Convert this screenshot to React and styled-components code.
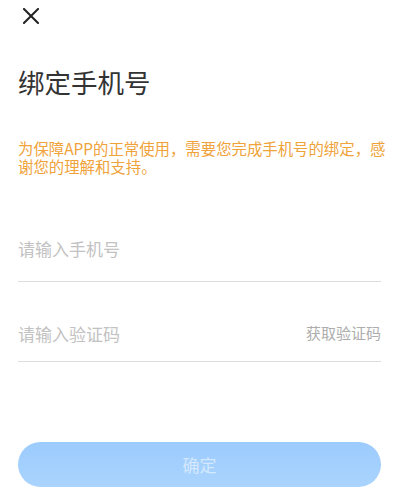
import React, { useState } from 'react'
import styled, { createGlobalStyle } from 'styled-components'

const GlobalStyle = createGlobalStyle`
    html, body {
        margin: 0;
        padding: 0;
        background: #FFF;
    }
    body {
        font-family: "Noto Sans CJK SC", "Noto Sans", sans-serif;
    }
    * {
        box-sizing: border-box;
    }
`

const Container = styled.div`
    width: 399px;
    height: 500px;
    padding: 0 18px;
    background-color: #FFF;
    display: flex;
    flex-direction: column;
`

const TopBar = styled.div`
    height: 32px;
    display: flex;
    align-items: flex-start;
    padding: 7px 0 0 4px;
`

const CloseButton = styled.button`
    border: none;
    background: none;
    padding: 0;
    width: 18px;
    height: 18px;
    cursor: pointer;
    display: flex;
    align-items: center;
    justify-content: center;
`

const Title = styled.h1`
    margin: 32px 0 0;
    font-size: 26.5px;
    font-weight: 400;
    line-height: 36px;
    color: #333;
`

const Notice = styled.p`
    margin: 39px -14px 0 0;
    font-size: 15.4px;
    line-height: 18px;
    color: #F0A33A;
`

const Field = styled.div`
    display: flex;
    align-items: center;
    margin-top: ${props => props.$top}px;
    padding-bottom: ${props => props.$bottom}px;
    border-bottom: 1px solid #DDD;
`

const Input = styled.input`
    flex: 1;
    min-width: 0;
    border: none;
    outline: none;
    padding: 0;
    height: 24px;
    font-family: inherit;
    font-size: 17px;
    color: #333;
    background: transparent;
    &::placeholder {
        color: #C2C2C2;
    }
`

const CodeLink = styled.span`
    font-size: 15px;
    line-height: 24px;
    color: #ADADAD;
    cursor: pointer;
`

const Submit = styled.button`
    margin-top: 80px;
    height: 45px;
    width: 100%;
    border: none;
    border-radius: 23px;
    background: linear-gradient(#9CCBFD, #AAD4FE);
    color: rgba(255, 255, 255, 0.55);
    font-family: inherit;
    font-size: 17px;
    cursor: pointer;
`

const CloseIcon = () => (
    <svg width="16" height="16" viewBox="0 0 16 16">
        <path d="M1 1 L15 15 M15 1 L1 15" stroke="#222" strokeWidth="2" strokeLinecap="square" fill="none" />
    </svg>
)

const App = () => {
    const [fields, setFields] = useState({})

    const handleChange = (e) => {
        setFields({
            ...fields,
            [e.target.name]: e.target.value
        })
    }

    return (
        <Container>
            <GlobalStyle />
            <TopBar>
                <CloseButton aria-label="close"><CloseIcon /></CloseButton>
            </TopBar>
            <Title>绑定手机号</Title>
            <Notice>为保障APP的正常使用，需要您完成手机号的绑定，感谢您的理解和支持。</Notice>
            <Field $top={61} $bottom={21}>
                <Input placeholder="请输入手机号" name="phone" onChange={handleChange} />
            </Field>
            <Field $top={39} $bottom={16}>
                <Input placeholder="请输入验证码" name="code" onChange={handleChange} />
                <CodeLink>获取验证码</CodeLink>
            </Field>
            <Submit disabled={!fields.phone || !fields.code}>确定</Submit>
        </Container>
    )
}

export default App
